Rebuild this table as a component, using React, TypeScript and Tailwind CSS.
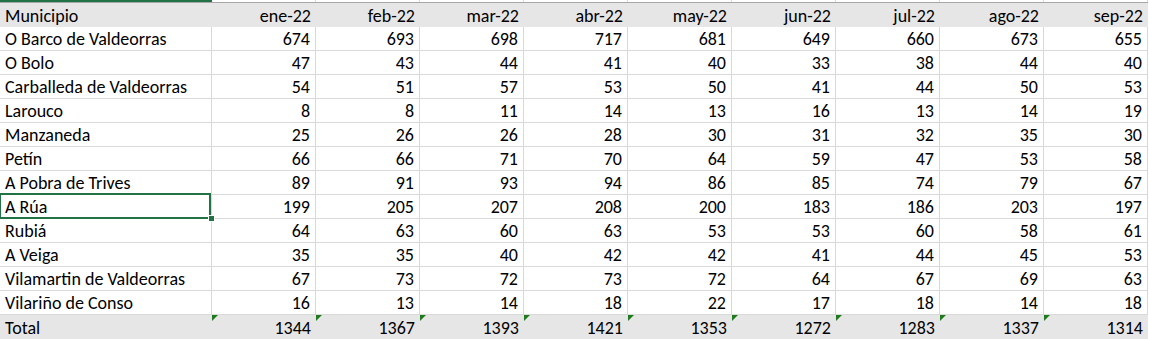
import clsx from 'clsx'

const months = ['ene-22', 'feb-22', 'mar-22', 'abr-22', 'may-22', 'jun-22', 'jul-22', 'ago-22', 'sep-22']

const rows: [string, number[]][] = [
  ['O Barco de Valdeorras', [674, 693, 698, 717, 681, 649, 660, 673, 655]],
  ['O Bolo', [47, 43, 44, 41, 40, 33, 38, 44, 40]],
  ['Carballeda de Valdeorras', [54, 51, 57, 53, 50, 41, 44, 50, 53]],
  ['Larouco', [8, 8, 11, 14, 13, 16, 13, 14, 19]],
  ['Manzaneda', [25, 26, 26, 28, 30, 31, 32, 35, 30]],
  ['Petín', [66, 66, 71, 70, 64, 59, 47, 53, 58]],
  ['A Pobra de Trives', [89, 91, 93, 94, 86, 85, 74, 79, 67]],
  ['A Rúa', [199, 205, 207, 208, 200, 183, 186, 203, 197]],
  ['Rubiá', [64, 63, 60, 63, 53, 53, 60, 58, 61]],
  ['A Veiga', [35, 35, 40, 42, 42, 41, 44, 45, 53]],
  ['Vilamartin de Valdeorras', [67, 73, 72, 73, 72, 64, 67, 69, 63]],
  ['Vilariño de Conso', [16, 13, 14, 18, 22, 17, 18, 14, 18]],
]

const totals = [1344, 1367, 1393, 1421, 1353, 1272, 1283, 1337, 1314]

const cell = 'h-6 flex items-center pt-px border-r border-b border-[#d9d9d9] px-[5px] overflow-hidden whitespace-nowrap'

const ErrorMark = () => (
  <span className="absolute left-0 top-0 w-0 h-0 border-t-[6px] border-r-[6px] border-t-[#1e7b1e] border-r-transparent" />
)

const App = () => (
  <div
    className="w-[1149px] h-[339px] bg-white overflow-hidden text-[18px] leading-none text-black"
    style={{ fontFamily: 'Carlito, Calibri, "Open Sans", "Liberation Sans", sans-serif' }}
  >
    <div className="grid grid-cols-[212px_repeat(9,104px)]">
      {/* strip of the row above */}
      <div className="h-[2px] bg-[#217346]" />
      {months.map((m) => (
        <div key={'s' + m} className="h-[2px] border-r border-[#d9d9d9]" />
      ))}

      {/* header */}
      <div className="h-[25px] bg-[#e7e6e6] border-t border-[#a6a6a6] flex items-center pt-px px-[5px]">Municipio</div>
      {months.map((m) => (
        <div key={m} className="h-[25px] bg-[#e7e6e6] border-t border-[#a6a6a6] flex items-center justify-end pt-px px-[5px]">
          {m}
        </div>
      ))}

      {rows.map(([name, vals]) => (
        <div key={name} className="contents">
          <div className={clsx(cell, 'relative', name === 'A Rúa' && 'overflow-visible')}>
            {name}
            {name === 'A Rúa' && (
              <>
                <span className="absolute -left-px -top-[2px] w-[212px] h-[26px] border-2 border-[#217346] pointer-events-none" />
                <span className="absolute -right-[4px] -bottom-[4px] w-[7px] h-[7px] bg-[#217346] border border-white z-10" />
              </>
            )}
          </div>
          {vals.map((v, i) => (
            <div key={i} className={clsx(cell, 'justify-end')}>
              {v}
            </div>
          ))}
        </div>
      ))}

      {/* total */}
      <div className="h-6 bg-[#e7e6e6] flex items-center pt-px px-[5px]">Total</div>
      {totals.map((t, i) => (
        <div key={i} className="relative h-6 bg-[#e7e6e6] flex items-center justify-end pt-px px-[5px]">
          <ErrorMark />
          {t}
        </div>
      ))}
    </div>
  </div>
)

export default App
